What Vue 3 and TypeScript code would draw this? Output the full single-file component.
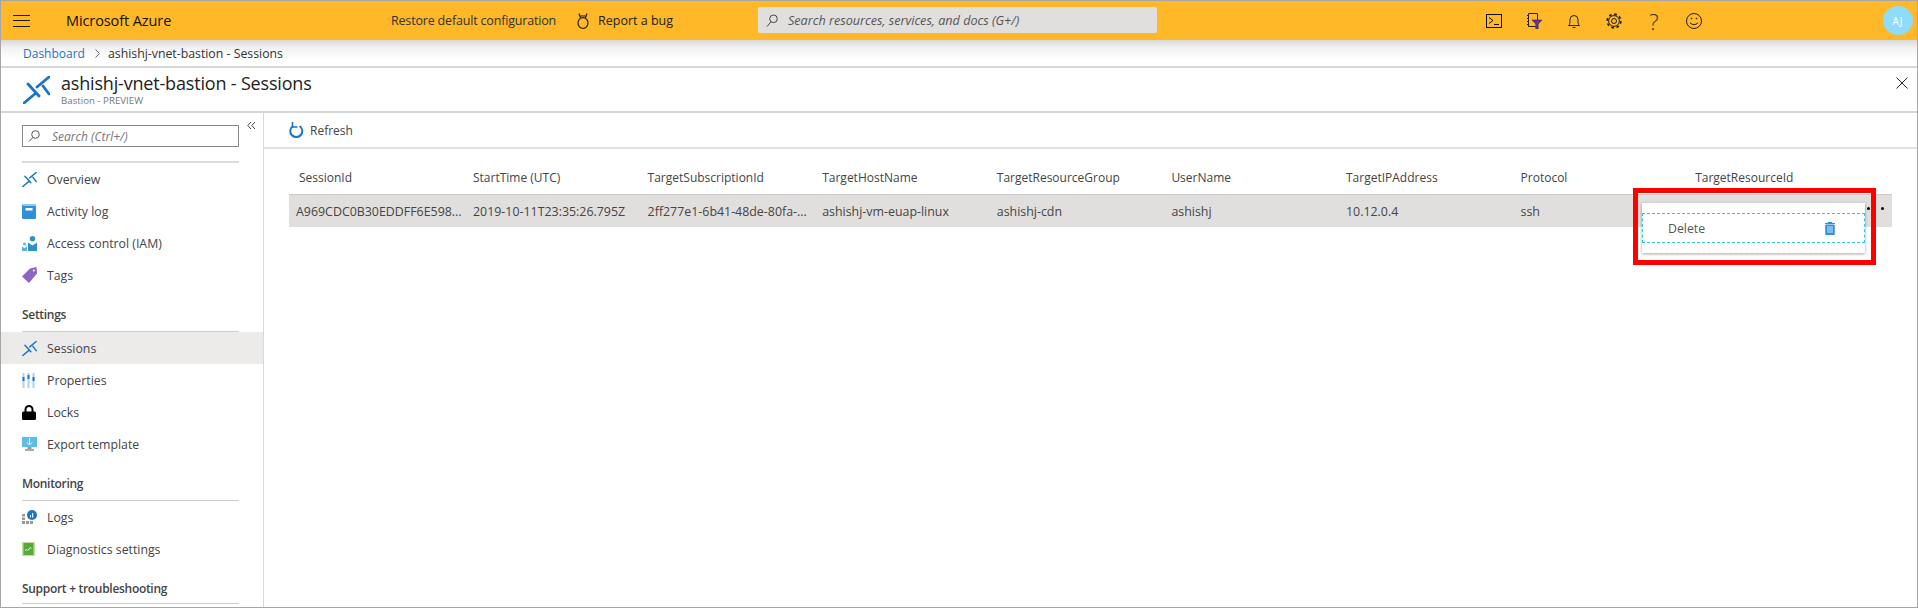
<script setup lang="ts">
type Item = { label: string; icon: string; active?: boolean }
type Group = { title?: string; items: Item[] }

const groups: Group[] = [
  { items: [
    { label: 'Overview', icon: 'bastion' },
    { label: 'Activity log', icon: 'log' },
    { label: 'Access control (IAM)', icon: 'iam' },
    { label: 'Tags', icon: 'tag' },
  ] },
  { title: 'Settings', items: [
    { label: 'Sessions', icon: 'bastion', active: true },
    { label: 'Properties', icon: 'props' },
    { label: 'Locks', icon: 'lock' },
    { label: 'Export template', icon: 'export' },
  ] },
  { title: 'Monitoring', items: [
    { label: 'Logs', icon: 'logs' },
    { label: 'Diagnostics settings', icon: 'diag' },
  ] },
  { title: 'Support + troubleshooting', items: [] },
]

const columns = ['SessionId', 'StartTime (UTC)', 'TargetSubscriptionId', 'TargetHostName', 'TargetResourceGroup', 'UserName', 'TargetIPAddress', 'Protocol', 'TargetResourceId']
const cells = ['A969CDC0B30EDDFF6E598...', '2019-10-11T23:35:26.795Z', '2ff277e1-6b41-48de-80fa-...', 'ashishj-vm-euap-linux', 'ashishj-cdn', 'ashishj', '10.12.0.4', 'ssh']
</script>

<template>
  <div class="page">
    <header class="topbar">
      <svg class="burger" width="17" height="12" viewBox="0 0 17 12"><path d="M0 .5h17M0 5.500h17M0 11.500h17" stroke="#1a1a1a" fill="none" /></svg>
      <span class="brand">Microsoft Azure</span>
      <span class="restore">Restore default configuration</span>
      <svg class="bug" width="14" height="16" viewBox="0 0 14 16" fill="none" stroke="#222" stroke-width="1.200"><ellipse cx="7" cy="10" rx="5" ry="5.400" /><path d="M4.500 4.800 3 .5M9.500 4.800 11 .5M3.500 3h7" /></svg>
      <span class="report">Report a bug</span>
      <div class="search"><svg width="12" height="13" viewBox="0 0 12 13" fill="none" stroke="#444"><circle cx="7.500" cy="4.800" r="3.800" /><path d="M4.800 8 1 12.500" /></svg><span>Search resources, services, and docs (G+/)</span></div>
      <div class="tools">
        <span class="tool"><svg width="16" height="14" viewBox="0 0 16 14" fill="none" stroke="#111"><rect x=".5" y=".5" width="15" height="13" /><path d="M3 3.500l4 3-4 3M8 10.500h5" /></svg></span>
        <span class="tool"><svg width="16" height="16" viewBox="0 0 16 16" fill="none" stroke="#222"><path d="M1 2.500h2M1 5.500h2M1 8.500h2M1 11.500h2M2.500 .5h9v13h-9z" /><path d="M6 7h10l-3.800 4v5l-2.400 0v-5z" fill="#6b2fa0" stroke="#222" stroke-width=".5" /></svg></span>
        <span class="tool"><svg width="12" height="14" viewBox="0 0 12 14" fill="none" stroke="#222"><path d="M.5 11.500c1.500-1 1.500-2.500 1.500-6a4 4 0 0 1 8 0c0 3.500 0 5 1.500 6zM4.500 13.500h3" /></svg></span>
        <span class="tool"><svg width="16" height="16" viewBox="0 0 16 16" fill="none" stroke="#222"><circle cx="8" cy="8" r="2.500" /><circle cx="8" cy="8" r="5.400" /><circle cx="8" cy="8" r="6.800" stroke-width="1.800" stroke-dasharray="2.700 2.640" /></svg></span>
        <span class="tool help">?</span>
        <span class="tool"><svg width="16" height="16" viewBox="0 0 16 16" fill="none" stroke="#222"><circle cx="8" cy="8" r="7.500" /><path d="M4 9.800q4 3.800 8 0" /><circle cx="5.500" cy="5.500" r=".8" fill="#222" stroke="none" /><circle cx="10.500" cy="5.500" r=".8" fill="#222" stroke="none" /></svg></span>
      </div>
      <div class="avatar">AJ</div>
    </header>

    <nav class="crumbs"><a>Dashboard</a><svg width="5" height="9" viewBox="0 0 5 9" fill="none" stroke="#666"><path d="M.5.500l4 4-4 4" /></svg><span>ashishj-vnet-bastion - Sessions</span></nav>

    <section class="title">
      <svg class="title-icon" width="27" height="28" viewBox="0 0 27 28" fill="none" stroke="#1c74c8" stroke-width="2.800" stroke-linecap="round"><path d="M26 1 14 11M5 8l11 12M20 10l6 8M1 27l12-10" /></svg>
      <div class="title-text"><h1>ashishj-vnet-bastion - Sessions</h1><p>Bastion - PREVIEW</p></div>
      <svg class="close" width="12" height="12" viewBox="0 0 12 12" stroke="#222" fill="none"><path d="M.5.500l11 11M11.500.500l-11 11" /></svg>
    </section>

    <div class="body">
      <aside class="side">
        <div class="side-search-row">
          <div class="side-search"><svg width="12" height="12" viewBox="0 0 12 12" fill="none" stroke="#555"><circle cx="7.500" cy="4.500" r="3.800" /><path d="M4.800 7.500 1 11.500" /></svg><span>Search (Ctrl+/)</span></div>
          <svg class="collapse" width="8" height="7" viewBox="0 0 8 7" fill="none" stroke="#444"><path d="M4 0 .8 3.500 4 7M8 0 4.800 3.500 8 7" /></svg>
        </div>
        <div v-for="(g, i) in groups" :key="i" class="group">
          <div class="group-title" :class="{ empty: !g.title }">{{ g.title }}</div>
          <div v-for="it in g.items" :key="it.label" class="item" :class="{ active: it.active }">
            <span class="ico">
              <svg v-if="it.icon === 'bastion'" width="15" height="15" viewBox="0 0 27 28" fill="none" stroke="#1c74c8" stroke-width="2.800" stroke-linecap="round"><path d="M26 1 14 11M5 8l11 12M20 10l6 8M1 27l12-10" /></svg>
              <svg v-else-if="it.icon === 'log'" width="14" height="15" viewBox="0 0 14 15"><rect width="14" height="15" rx="1.500" fill="#2f8fdd" /><rect x="1" width="13" height="2" fill="#8cc8f2" /><rect x="3.500" y="4" width="7" height="2.500" fill="#fff" /></svg>
              <svg v-else-if="it.icon === 'iam'" width="15" height="15" viewBox="0 0 15 15" fill="#2f8fc9"><circle cx="10.500" cy="2.700" r="2.700" /><path d="M6 15V6.500l4.500 3 4.500-3V15z" /><circle cx="2.500" cy="8" r="1.500" fill="#59b4d9" /><path d="M0 15v-4.500l2.500 1.500 2.500-1.500V15z" fill="#59b4d9" /></svg>
              <svg v-else-if="it.icon === 'tag'" width="15" height="16" viewBox="0 0 15 16"><path d="M8 1.500 14.500 0 15 6.500 7 16 0 9.500z" fill="#8e63c6" /><circle cx="11.800" cy="3.500" r="1" fill="#fff" /></svg>
              <svg v-else-if="it.icon === 'props'" width="13" height="15" viewBox="0 0 13 15" fill="none" stroke-width="2"><path d="M1.500 0v15M6.500 0v15M11.500 0v15" stroke="#a8d4ef" /><path d="M1.500 4v4M6.500 2v4M11.500 4v4" stroke="#1c74c8" /></svg>
              <svg v-else-if="it.icon === 'lock'" width="14" height="15" viewBox="0 0 14 15"><path d="M3.500 8V4.500a3.500 3.500 0 0 1 7 0V8" fill="none" stroke="#000" stroke-width="2" /><rect y="6.500" width="14" height="8.500" rx="1.500" /></svg>
              <svg v-else-if="it.icon === 'export'" width="15" height="14" viewBox="0 0 15 14"><rect width="15" height="10" fill="#5bbde8" /><path d="M7.500 1v6.500M5 5.500l2.500 2.500L10 5.500" stroke="#fff" fill="none" /><rect x="5.500" y="10" width="4" height="2" fill="#999" /><rect x="3" y="12" width="9" height="2" fill="#aaa" /></svg>
              <svg v-else-if="it.icon === 'logs'" width="15" height="14" viewBox="0 0 15 14"><circle cx="10" cy="5" r="5" fill="#1c74c8" /><path d="M0 4h3v2.500H0zM0 7.500h3V10H0zM0 11h3v3H0zM4 11h3v3H4zM8 11h3v3H8z" fill="#999" /><path d="M8 5h1v2.500H8zM10 3h1.200v4.500H10z" fill="#fff" /></svg>
              <svg v-else width="13" height="14" viewBox="0 0 13 14"><rect width="13" height="14" fill="#c5dfa0" /><rect x="1.500" y="1" width="10" height="12" fill="#59a83b" /><path d="M3 8.500l2-1 1 1 2-3 1.500 1" stroke="#dff0c8" fill="none" /></svg>
            </span>
            <span>{{ it.label }}</span>
          </div>
        </div>
      </aside>

      <main class="main">
        <div class="toolbar">
          <svg width="15" height="16" viewBox="0 0 15 16" fill="none" stroke="#1c74c8" stroke-width="2"><path d="M10.500 4a6 6 0 1 1-6.500 0" /><path d="M3.500 0v5h5" stroke-width="1.600" /></svg>
          <span>Refresh</span>
        </div>
        <div class="table-wrap">
          <div class="tr head"><div v-for="c in columns" :key="c" class="td" :class="{ wide: c === 'TargetResourceId' }">{{ c }}</div></div>
          <div class="tr row">
            <div v-for="(c, i) in cells" :key="i" class="td">{{ c }}</div>
            <div class="td dots"><i></i><i></i></div>
          </div>
          <div class="highlight">
            <div class="menu">
              <div class="menu-item"><span>Delete</span>
                <svg width="10" height="13" viewBox="0 0 10 13" fill="none" stroke="#2f8fdd"><path d="M0 1.500h10M3 1.500V.5h4v1" /><path d="M.8 3h8.400v9.500H.8z" fill="#2f8fdd" /><path d="M3 4v7M5 4v7M7 4v7" stroke="#fff" stroke-width=".8" /></svg>
              </div>
            </div>
          </div>
        </div>
      </main>
    </div>
  </div>
</template>

<style>
html, body { margin: 0; background: #fff; overflow: hidden; }
</style>

<style scoped>
.page { width: 1918px; height: 608px; box-sizing: border-box; border: 1px solid #a6a6a6; overflow: hidden; font-family: "Open Sans", "Noto Sans", sans-serif; font-size: 12px; color: #333; display: flex; flex-direction: column; background: #fff; }
.topbar { height: 39px; flex: none; background: #ffb827; display: flex; align-items: center; color: #222; padding-left: 12px; }
.burger { flex: none; }
.brand { margin-left: 36px; font-size: 14.500px; color: #111; letter-spacing: -.1px; width: 325px; flex: none; white-space: nowrap; }
.restore { font-size: 12.500px; letter-spacing: -.18px; width: 185px; flex: none; color: #333; white-space: nowrap; }
.bug { flex: none; }
.report { margin-left: 8px; font-size: 12.500px; width: 160px; flex: none; white-space: nowrap; }
.search { width: 399px; height: 26px; margin-top: -1px; background: #e1dfdd; border-radius: 2px; flex: none; display: flex; align-items: center; gap: 10px; padding-left: 8px; box-sizing: border-box; font-style: italic; color: #555; font-size: 12.600px; white-space: nowrap; }
.tools { margin-left: 317px; display: flex; flex: none; align-items: center; }
.tool { width: 40px; display: flex; justify-content: center; align-items: center; height: 20px; }
.help { font-size: 22px; line-height: 20px; color: #333; font-weight: 300; }
.avatar { margin-left: 169px; width: 30px; height: 29px; flex: none; border-radius: 50%; background: #8ddcfb; color: #fff; font-size: 10px; display: flex; align-items: center; justify-content: center; letter-spacing: 1px; }
.crumbs { height: 28px; flex: none; box-sizing: border-box; padding: 1px 0 0 22px; display: flex; align-items: center; gap: 8px; background: linear-gradient(#d8d8d8, #f2f2f2 30%, #fff 75%); border-bottom: 2px solid #d6d6d6; font-size: 12.300px; color: #333; }
.crumbs a { color: #1c74c8; font-size: 12px; margin-right: 2px; }
.title { height: 45px; flex: none; box-sizing: border-box; border-bottom: 2px solid #d6d6d6; display: flex; align-items: flex-start; padding: 4px 9px 0 22px; }
.title-icon { flex: none; margin-top: 4px; margin-right: 11px; }
h1 { margin: 0; font-weight: 400; font-size: 18px; line-height: 22px; color: #222; letter-spacing: -.18px; }
.title p { margin: 1px 0 0; font-size: 9.700px; line-height: 12px; color: #777; }
.close { margin-left: auto; margin-top: 5px; flex: none; }
.body { flex: 1; display: flex; min-height: 0; }
.side { width: 263px; flex: none; border-right: 1px solid #d8d8d8; box-sizing: border-box; }
.side-search-row { display: flex; height: 48px; box-sizing: border-box; align-items: flex-start; padding: 12px 0 0 21px; }
.side-search { width: 217px; height: 22px; flex: none; box-sizing: border-box; border: 1px solid #888; display: flex; align-items: center; gap: 12px; padding-left: 5px; font-style: italic; color: #777; font-size: 12px; }
.collapse { margin-left: 8px; margin-top: -3px; flex: none; }
.group-title { margin-left: 21px; width: 217px; height: 41px; padding-top: 15px; line-height: 17px; border-bottom: 1px solid #ccc; font-size: 12px; font-weight: 600; color: #444; letter-spacing: -.3px; box-sizing: border-box; }
.group:last-child .group-title { height: 39px; }
.group-title.empty { height: 2px; padding: 0; border-bottom: 2px solid #ddd; }
.item { height: 32px; display: flex; align-items: center; padding-left: 21px; color: #444; font-size: 12.300px; }
.item.active { background: #edebe9; }
.ico { width: 25px; flex: none; display: flex; }
.main { flex: 1; min-width: 0; }
.toolbar { height: 36px; box-sizing: border-box; border-bottom: 2px solid #e0e0e0; display: flex; align-items: center; gap: 6px; padding-left: 25px; font-size: 12px; color: #444; }
.table-wrap { padding: 0 25px; position: relative; }
.tr { display: grid; grid-template-columns: 184px repeat(7, 174.600px) 1fr; }
.head { height: 46px; align-items: end; padding-bottom: 8px; box-sizing: border-box; border-bottom: 1px solid #ccc; color: #444; font-size: 12px; }
.head .td:first-child { padding-left: 10px; }
.wide { margin-left: 0; }
.row { height: 32px; background: #e1dfdd; align-items: center; color: #444; font-size: 12.400px; }
.row .td:first-child { padding-left: 7px; }
.td { white-space: nowrap; }
.dots { display: flex; justify-content: flex-end; gap: 11px; padding-right: 8px; margin-top: -5px; }
.dots i { width: 3px; height: 3px; border-radius: 50%; background: #000; }
.highlight { position: absolute; left: 1369px; top: 39px; width: 243px; height: 77px; box-sizing: border-box; border: 5px solid #ff0000; }
.menu { position: absolute; left: 4px; top: 10px; width: 223px; height: 50px; background: #fff; box-shadow: 0 1px 3px rgba(0,0,0,.35); }
.menu-item { margin-top: 10px; height: 30px; box-sizing: border-box; border: 1px dashed #2ec4f5; display: flex; align-items: center; justify-content: space-between; padding: 0 29px 0 25px; color: #555; font-size: 12.300px; }
</style>
